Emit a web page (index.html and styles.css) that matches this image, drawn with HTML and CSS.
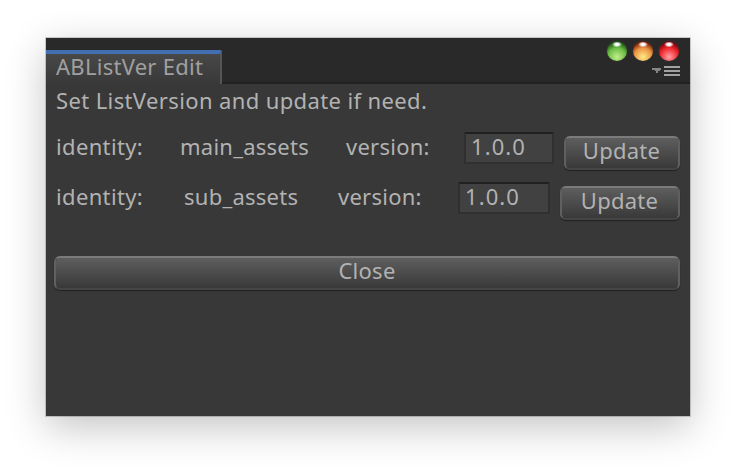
FILE: index.html
```html
<!DOCTYPE html>
<html lang="en">
<head>
<meta charset="utf-8">
<title>ABListVer Edit</title>
<link rel="stylesheet" href="styles.css">
</head>
<body>
<main class="window">
  <header class="titlebar">
    <div class="tab"><span>ABListVer Edit</span></div>
    <div class="controls">
      <div class="lights">
        <i class="light green"></i><i class="light orange"></i><i class="light red"></i>
      </div>
      <svg class="menu" width="28" height="12" viewBox="0 0 28 12">
        <path d="M0 2h9v2H8v1H6v2H4V5H3V4H0z" fill="#858585"/>
        <path d="M12 0h16v2H12zM12 4h16v2H12zM12 8h16v2H12z" fill="#a2a2a2"/>
      </svg>
    </div>
  </header>
  <p class="message">Set ListVersion and update if need.</p>
  <div class="row first">
    <span class="label">identity:</span>
    <span class="name">main_assets</span>
    <span class="version">version:</span>
    <span class="field">1.0.0</span>
    <button class="button update">Update</button>
  </div>
  <div class="row second">
    <span class="label">identity:</span>
    <span class="name">sub_assets</span>
    <span class="version">version:</span>
    <span class="field">1.0.0</span>
    <button class="button update">Update</button>
  </div>
  <button class="button close">Close</button>
</main>
</body>
</html>
```
FILE: styles.css
```css
* { box-sizing: border-box; }
body {
  margin: 0;
  padding: 38px 46px 54px;
  height: 470px;
  overflow: hidden;
  background: #fff;
  font-family: "Noto Sans", sans-serif;
  font-size: 22px;
  line-height: 30px;
  color: #b2b2b2;
}
.window {
  width: 644px;
  height: 378px;
  background: #383838;
  box-shadow: 0 0 0 1px rgba(0,0,0,.18), 0 11px 38px rgba(0,0,0,.24);
}
.titlebar {
  display: flex;
  justify-content: space-between;
  height: 46px;
  background: #292929;
  border-bottom: 2px solid #212121;
}
.tab {
  width: 176px;
  height: 34px;
  margin-top: 12px;
  padding: 0 0 0 10px;
  border-top: 4px solid #426fb1;
  border-right: 2px solid #555;
  border-top-right-radius: 2px;
  background: linear-gradient(#484848, #393939);
  color: #a0a0a0;
  line-height: 24px;
  letter-spacing: .27px;
  white-space: nowrap;
}
.controls {
  display: flex;
  flex-direction: column;
  align-items: flex-end;
  padding: 3px 11px 0 0;
}
.lights { display: flex; gap: 6px; }
.light {
  width: 20px;
  height: 20px;
  border-radius: 50%;
  box-shadow: 0 0 2px #5558;
}
.green { background: radial-gradient(ellipse 5px 3px at 50% 17%, #fff 0 35%, transparent), radial-gradient(circle 15px at 50% 80%, #c1ef8b 0, #6dbd45 60%, #184f0d 100%); }
.orange { background: radial-gradient(ellipse 5px 3px at 50% 17%, #fff 0 35%, transparent), radial-gradient(circle 15px at 50% 80%, #ffeb86 0, #eb9443 60%, #721500 100%); }
.red { background: radial-gradient(ellipse 5px 3px at 50% 17%, #fff 0 35%, transparent), radial-gradient(circle 15px at 50% 80%, #ffa0a5 0, #ef282e 60%, #730006 100%); }
.menu { margin: 5px -1px 0 0; }
.message {
  margin: 0;
  padding: 1px 0 0 10px;
  height: 48px;
  letter-spacing: .38px;
  white-space: nowrap;
}
.row {
  display: flex;
  height: 50px;
  padding: 0 10px;
  white-space: nowrap;
}
.label, .name, .version { margin-top: -1px; letter-spacing: .25px; }
.label { width: 124px; letter-spacing: .35px; }
.name { width: 166px; }
.version { width: 118px; }
.second .label { width: 128px; }
.second .name { width: 154px; }
.second .version { width: 120px; }
.field {
  width: 90px;
  height: 32px;
  padding-left: 5px;
  line-height: 25px;
  letter-spacing: 1.1px;
  background: #414141;
  border: 2px solid #303030;
  border-top-color: #202020;
}
.second .field { width: 92px; }
.button {
  height: 34px;
  padding: 0 0 6px;
  border: 2px solid #555;
  border-color: #7b7b7b #606060 #454545;
  border-radius: 6px;
  background: linear-gradient(#5e5e5e, #393939) padding-box;
  box-shadow: 0 1px 1px #222;
  color: #b2b2b2;
  font: inherit;
  line-height: 24px;
  letter-spacing: .25px;
}
.update { width: 116px; margin: 4px 0 0 10px; padding-right: 1px; }
.second .update { width: 120px; }
.close { display: block; width: 626px; margin: 24px 0 0 8px; }
```
